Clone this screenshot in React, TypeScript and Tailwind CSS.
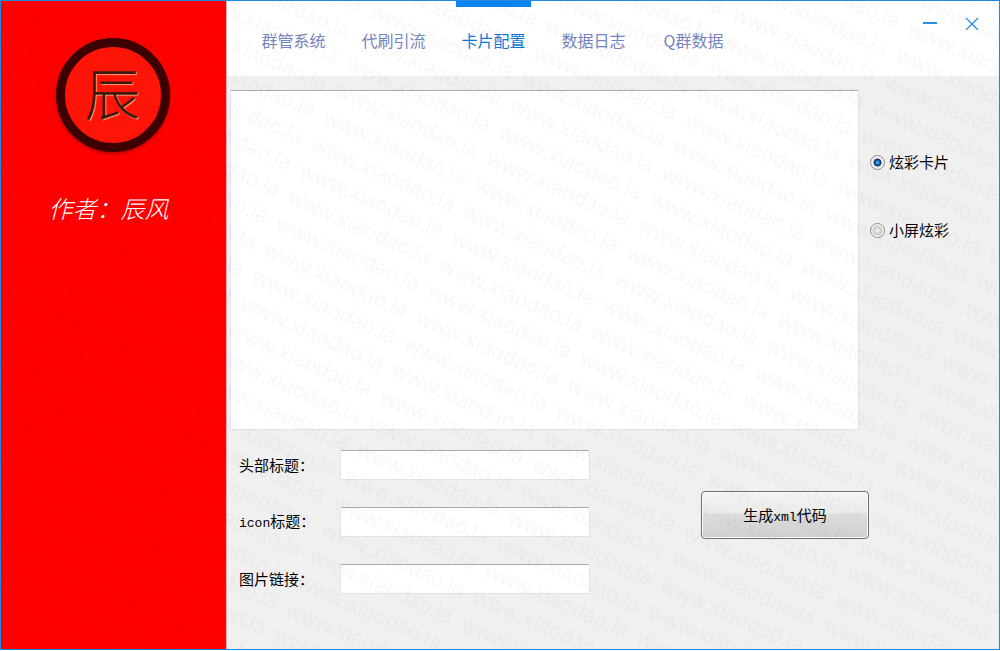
import { useState } from "react";
import clsx from "clsx";

const tabs = ["群管系统", "代刷引流", "卡片配置", "数据日志", "Q群数据"];

const fields = [
  { id: "head-title", prefix: "", label: "头部标题：" },
  { id: "icon-title", prefix: "icon", label: "标题：" },
  { id: "image-link", prefix: "", label: "图片链接：" },
];

const cardTypes = ["炫彩卡片", "小屏炫彩"];

function Watermark() {
  return (
    <svg
      className="pointer-events-none absolute inset-0 h-full w-full"
      aria-hidden="true"
    >
      <defs>
        <pattern
          id="watermark"
          width="166"
          height="29"
          patternUnits="userSpaceOnUse"
          patternTransform="translate(325 102) rotate(24)"
        >
          <text
            x="4"
            y="20"
            fontSize="21"
            fill="#000"
            fillOpacity="0.03"
            className="font-['Open_Sans',sans-serif]"
          >
            www.xiaodao.la
          </text>
        </pattern>
      </defs>
      <rect width="100%" height="100%" fill="url(#watermark)" />
    </svg>
  );
}

function Sidebar() {
  return (
    <aside className="flex w-[226px] shrink-0 flex-col items-center border-r border-[#ffb4b4] bg-[#ff0000] pt-[37px] pr-0.5">
      <div className="flex size-[114px] items-center justify-center rounded-full border-9 border-[#3d0000] bg-[#ff1408] pb-2 shadow-[0_2px_3px_rgba(120,0,0,0.5)]">
        <span className="font-['Noto_Sans_CJK_SC',sans-serif] text-[56px] leading-none font-light text-[#3a1a10] [text-shadow:1px_1px_1px_#ff9a70]">
          辰
        </span>
      </div>
      <p className="mt-10 pr-2 font-['Noto_Sans_CJK_SC',sans-serif] text-2xl font-light text-white italic">
        作者：辰风
      </p>
    </aside>
  );
}

function Header() {
  const [active, setActive] = useState("卡片配置");

  return (
    <header className="flex h-[75px] shrink-0 justify-between bg-white pr-4 pl-[29px]">
      <nav className="flex gap-[25px]">
        {tabs.map((tab) => (
          <button
            key={tab}
            type="button"
            onClick={() => setActive(tab)}
            className={clsx(
              "w-[75px] border-t-6 pb-1 font-['Noto_Sans_CJK_SC',sans-serif] text-base whitespace-nowrap",
              tab === active
                ? "border-[#0a84f0] text-[#0a7ad8]"
                : "border-transparent text-[#7484c0]",
            )}
          >
            {tab}
          </button>
        ))}
      </nav>
      <div className="flex items-start gap-5 pt-[11px]">
        <button type="button" aria-label="最小化" className="p-1 text-[#2a8fe4]">
          <svg width="14" height="14" viewBox="0 0 14 14" fill="none">
            <path d="M0 7H14" stroke="currentColor" strokeWidth="2" />
          </svg>
        </button>
        <button type="button" aria-label="关闭" className="p-1 text-[#2a8fe4]">
          <svg width="14" height="14" viewBox="0 0 14 14" fill="none">
            <path
              d="M1 2L13 14M13 2L1 14"
              stroke="currentColor"
              strokeWidth="1.3"
            />
          </svg>
        </button>
      </div>
    </header>
  );
}

export default function App() {
  const [cardType, setCardType] = useState("炫彩卡片");

  return (
    <div className="h-screen bg-white pb-px">
      <div className="relative flex h-full overflow-hidden border border-[#2188e0]">
        <Sidebar />
        <div className="flex min-w-0 flex-1 flex-col bg-[#f0f0f0]">
          <Header />
          <main className="flex flex-1 flex-col pt-[14px] pl-[3px] font-['Noto_Sans_CJK_SC',sans-serif] text-[15px] text-black">
            <div className="flex flex-1">
              <textarea
                aria-label="代码"
                className="flex-1 resize-none rounded-xs border border-[#e0e4ea] border-t-[#a9a9b1] bg-white p-1 outline-none"
              />
              <fieldset className="flex w-[140px] flex-col gap-11 pt-[60px] pl-[11px]">
                {cardTypes.map((type) => (
                  <label key={type} className="flex items-center gap-1 leading-6">
                    <input
                      type="radio"
                      name="card-type"
                      checked={cardType === type}
                      onChange={() => setCardType(type)}
                      className="size-[15px] appearance-none rounded-full border border-[#8c8c8c] bg-[radial-gradient(circle,#f4f4f4_0,#d4d4d4_35%,#c8c8c8_48%,#f4f4f4_58%)] checked:bg-[radial-gradient(circle_at_50%_50%,#5cc8ff_0,#1673c4_20%,#0c2e56_38%,#f0f0f0_48%)]"
                    />
                    {type}
                  </label>
                ))}
              </fieldset>
            </div>
            <div className="flex items-start pt-5 pb-[55px] pl-[9px]">
              <div className="flex flex-col gap-[27px]">
                {fields.map((field) => (
                  <div key={field.id} className="flex h-[30px] items-center">
                    <label htmlFor={field.id} className="w-[101px]">
                      {field.prefix && (
                        <span className="font-['Liberation_Mono',monospace] text-[13px]">
                          {field.prefix}
                        </span>
                      )}
                      {field.label}
                    </label>
                    <input
                      id={field.id}
                      type="text"
                      className="h-full w-[250px] rounded-xs border border-[#e0e4ea] border-t-[#a9a9b1] bg-white px-1 outline-none"
                    />
                  </div>
                ))}
              </div>
              <button
                type="button"
                className="mt-[41px] ml-[111px] h-12 w-[168px] rounded-[4px] border border-[#707070] bg-[linear-gradient(#f4f4f4,#ebebeb_46%,#dddddd_47%,#cfcfcf)] pt-0.5 shadow-[inset_0_0_0_1px_#fafafa]"
              >
                生成
                <span className="font-['Liberation_Mono',monospace] text-[13px]">
                  xml
                </span>
                代码
              </button>
            </div>
          </main>
        </div>
        <Watermark />
      </div>
    </div>
  );
}
